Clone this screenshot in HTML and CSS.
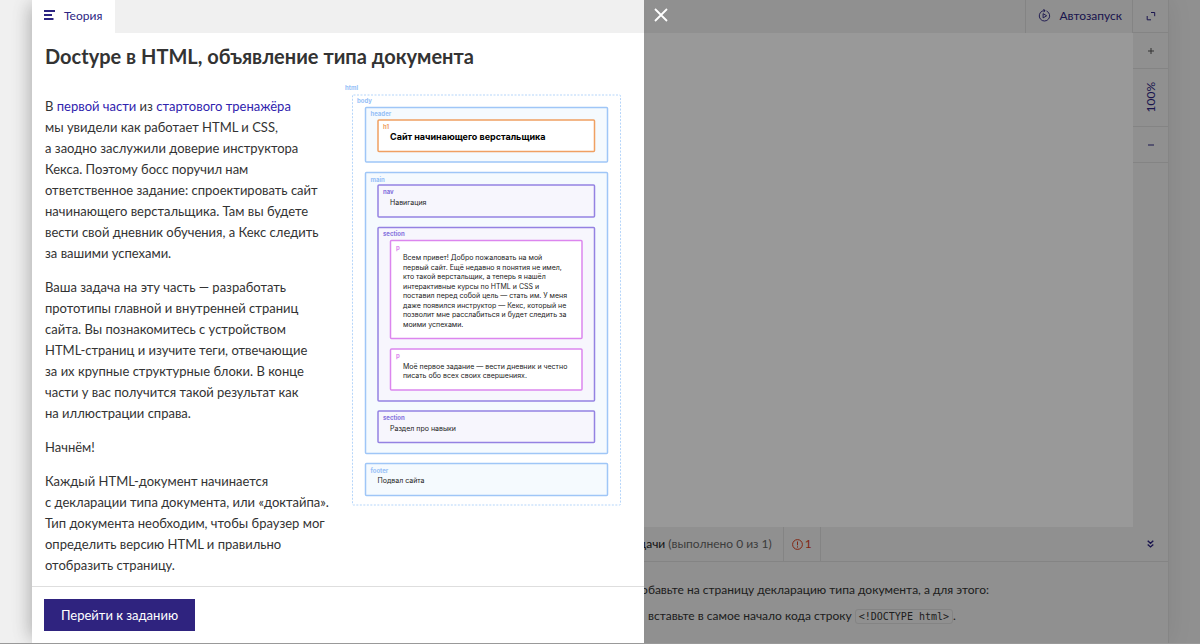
FILE: index.html
```html
<!DOCTYPE html>
<html lang="ru">
<head>
<meta charset="utf-8">
<title>Doctype в HTML, объявление типа документа</title>
<meta name="viewport" content="width=device-width, initial-scale=1">
<link rel="stylesheet" href="styles.css">
</head>
<body>
<div class="page">
  <div class="app">
    <div class="editor"></div>
    <main class="workspace">
      <div class="toolbar">
        <button class="toolbar__button" type="button">
          <svg class="icon-run" viewBox="0 0 14 14" aria-hidden="true"><path d="M9.2 2.2A5.6 5.6 0 1 1 4.5 2.3L7.5 1.6"/><path d="M5.6 0 7.6 1.6 6.2 3.4M5.5 5v4.6l3.8-2.3z"/></svg>
          Автозапуск
        </button>
        <button class="toolbar__expand" type="button" aria-label="Развернуть">
          <svg class="icon-expand" viewBox="0 0 10 10" aria-hidden="true"><path d="M5 1.5h3.7v3.7M1.2 5v3.8H5"/></svg>
        </button>
      </div>
      <div class="result">
        <div class="preview"></div>
        <div class="scale">
          <button class="scale__step scale__step--muted" type="button" aria-label="Увеличить"><svg class="icon-step" viewBox="0 0 6 6" aria-hidden="true"><path d="M0 3h6M3 0v6"/></svg></button>
          <button class="scale__value" type="button"><span class="scale__text">100%</span></button>
          <button class="scale__step" type="button" aria-label="Уменьшить"><svg class="icon-step" viewBox="0 0 6 6" aria-hidden="true"><path d="M0 3h6"/></svg></button>
        </div>
      </div>
      <div class="tasks-bar">
        <div class="tasks-bar__title">Задачи <span class="tasks-bar__count">(выполнено 0 из 1)</span></div>
        <div class="tasks-bar__errors">
          <svg class="icon-error" viewBox="0 0 11 11" aria-hidden="true"><circle cx="5.5" cy="5.5" r="4.9"/><path d="M5.5 2.5v3.8M5.5 7.3v1.3"/></svg>1
        </div>
        <button class="tasks-bar__toggle" type="button" aria-label="Свернуть">
          <svg class="icon-toggle" viewBox="0 0 7 8" aria-hidden="true"><path d="M.7.7l2.8 2.5L6.3.7M.7 4.4l2.8 2.5 2.8-2.5"/></svg>
        </button>
      </div>
      <div class="tasks">
        <p class="tasks__intro">Добавьте на страницу декларацию типа документа, а для этого:</p>
        <ul class="tasks__list">
          <li>вставьте в самое начало кода строку <code class="tasks__code">&lt;!DOCTYPE html&gt;</code>.</li>
        </ul>
      </div>
    </main>
  </div>

  <div class="layer">
    <section class="theory" role="dialog" aria-labelledby="theory-title">
      <div class="theory__tabs">
        <button class="theory__tab" type="button">
          <svg class="icon-menu" viewBox="0 0 12 10" aria-hidden="true"><path d="M0 1h11M0 5h8M0 9h9.5"/></svg>
          Теория
        </button>
      </div>
      <div class="theory__body">
        <h1 class="theory__title" id="theory-title">Doctype в HTML, объявление типа документа</h1>
        <div class="theory__columns">
          <div class="theory__text">
            <p>В <a href="#part">первой части</a> из <a href="#trainer">стартового тренажёра</a><br>мы увидели как работает HTML и CSS,<br>а заодно заслужили доверие инструктора<br>Кекса. Поэтому босс поручил нам<br>ответственное задание: спроектировать сайт<br>начинающего верстальщика. Там вы будете<br>вести свой дневник обучения, а Кекс следить<br>за вашими успехами.</p>
            <p>Ваша задача на эту часть — разработать<br>прототипы главной и внутренней страниц<br>сайта. Вы познакомитесь с устройством<br>HTML-страниц и изучите теги, отвечающие<br>за их крупные структурные блоки. В конце<br>части у вас получится такой результат как<br>на иллюстрации справа.</p>
            <p>Начнём!</p>
            <p>Каждый HTML-документ начинается<br>с декларации типа документа, или «доктайпа».<br>Тип документа необходим, чтобы браузер мог<br>определить версию HTML и правильно<br>отобразить страницу.</p>
          </div>
          <svg class="scheme" viewBox="0 0 552 844" role="img" aria-label="Структура страницы">
            <rect class="scheme__body" x="15" y="22" width="536" height="820" rx="2"/>
            <rect class="scheme__block" x="41" y="47" width="484" height="109" rx="2"/>
            <rect class="scheme__h1" x="66" y="72" width="433" height="63" rx="2"/>
            <rect class="scheme__block" x="41" y="177" width="484" height="562" rx="2"/>
            <rect class="scheme__section" x="66" y="202" width="433" height="64" rx="2"/>
            <rect class="scheme__section" x="66" y="287" width="433" height="347" rx="2"/>
            <rect class="scheme__p" x="91" y="313" width="383" height="196" rx="2"/>
            <rect class="scheme__p" x="91" y="530" width="383" height="82" rx="2"/>
            <rect class="scheme__section" x="66" y="654" width="433" height="63" rx="2"/>
            <rect class="scheme__block" x="41" y="759" width="484" height="64" rx="2"/>
            <g class="scheme__tag scheme__tag--blue">
              <text x="0" y="12">html</text>
              <text x="24" y="38">body</text>
              <text x="51" y="64">header</text>
              <text x="51" y="195">main</text>
              <text x="51" y="777">footer</text>
            </g>
            <text class="scheme__tag scheme__tag--orange" x="76" y="89">h1</text>
            <g class="scheme__tag scheme__tag--violet">
              <text x="76" y="220">nav</text>
              <text x="76" y="304">section</text>
              <text x="76" y="672">section</text>
            </g>
            <g class="scheme__tag scheme__tag--pink">
              <text x="102" y="331">p</text>
              <text x="102" y="548">p</text>
            </g>
            <text class="scheme__title" x="90" y="112">Сайт начинающего верстальщика</text>
            <g class="scheme__copy">
              <text x="90" y="242">Навигация</text>
              <text x="116" y="352">Всем привет! Добро пожаловать на мой</text>
              <text x="116" y="371">первый сайт. Ещё недавно я понятия не имел,</text>
              <text x="116" y="390">кто такой верстальщик, а теперь я нашёл</text>
              <text x="116" y="409">интерактивные курсы по HTML и CSS и</text>
              <text x="116" y="428">поставил перед собой цель — стать им. У меня</text>
              <text x="116" y="447">даже появился инструктор — Кекс, который не</text>
              <text x="116" y="466">позволит мне расслабиться и будет следить за</text>
              <text x="116" y="485">моими успехами.</text>
              <text x="116" y="569">Моё первое задание — вести дневник и честно</text>
              <text x="116" y="588">писать обо всех своих свершениях.</text>
              <text x="90" y="693">Раздел про навыки</text>
              <text x="65" y="798">Подвал сайта</text>
            </g>
          </svg>
        </div>
      </div>
      <div class="theory__footer">
        <button class="theory__next" type="button">Перейти к заданию</button>
      </div>
    </section>
    <div class="backdrop">
      <button class="backdrop__close" type="button" aria-label="Закрыть">
        <svg class="icon-close" viewBox="0 0 14 14" aria-hidden="true"><path d="M1 1l12 12M13 1 1 13"/></svg>
      </button>
    </div>
  </div>
</div>
</body>
</html>
```
FILE: styles.css
```css
* {
  box-sizing: border-box;
}

body {
  margin: 0;
  font-family: Lato, Roboto, sans-serif;
  font-size: 12px;
  line-height: 21px;
  color: #333;
  background: #f0f0f0;
}

button {
  margin: 0;
  padding: 0;
  border: 0;
  background: none;
  font: inherit;
  color: #2c2482;
  cursor: pointer;
}

svg {
  display: block;
  flex: none;
}

svg path,
svg circle {
  fill: none;
  stroke: currentColor;
}

p {
  margin: 0;
}

.page {
  position: relative;
  min-height: 100vh;
  display: flex;
  border-bottom: 1px solid #999;
  overflow: hidden;
}

/* Trainer workspace */

.app {
  flex: 1;
  display: grid;
  grid-template-columns: 1fr 1fr;
  margin: 0 31px 0 32px;
  border-right: 1px solid #dedede;
  box-shadow: 0 0 24px rgba(0, 0, 0, 0.08);
}

.editor {
  background: #fff;
}

.workspace {
  display: flex;
  flex-direction: column;
  background: #f0f0f0;
}

.toolbar {
  display: flex;
  justify-content: flex-end;
  height: 33px;
}

.toolbar__button {
  display: flex;
  align-items: center;
  gap: 8px;
  padding: 0 10px 3px 12px;
  border-left: 1px solid #dcdcdc;
}

.toolbar__expand {
  width: 36px;
  display: grid;
  place-items: center;
  border-left: 1px solid #dcdcdc;
  border-bottom: 1px solid #dcdcdc;
}

.result {
  flex: 1;
  display: flex;
}

.preview {
  flex: 1;
  background: #fff;
}

.scale {
  width: 35px;
  display: flex;
  flex-direction: column;
}

.scale__step,
.scale__value {
  display: grid;
  place-items: center;
  height: 36px;
  border-bottom: 1px solid #dcdcdc;
}

.scale__step--muted {
  color: #555;
}

.scale__value {
  height: 58px;
}

.scale__text {
  writing-mode: vertical-rl;
  transform: rotate(180deg);
}

.tasks-bar {
  display: flex;
  height: 35px;
  line-height: 34px;
  border-bottom: 1px solid #dcdcdc;
}

.tasks-bar__title {
  padding: 0 11px 0 26px;
  color: #222;
}

.tasks-bar__count {
  color: #666;
}

.tasks-bar__errors {
  display: flex;
  align-items: center;
  gap: 2px;
  padding: 0 8px;
  border: solid #dcdcdc;
  border-width: 0 1px;
  color: #d8401f;
}

.tasks-bar__toggle {
  width: 35px;
  margin-left: auto;
  display: grid;
  place-items: center;
}

.tasks {
  padding: 17px 24px 16px 32px;
}

.tasks__list {
  margin: 5px 0 0;
  padding: 0 0 0 16px;
}

.tasks__code {
  padding: 1px 3px;
  border: 1px solid #dcdcdc;
  border-radius: 3px;
  font-family: "DejaVu Sans Mono", monospace;
  font-size: 10px;
}

/* Theory panel over the workspace */

.layer {
  position: absolute;
  inset: 0;
  display: flex;
  padding-left: 32px;
}

.theory {
  flex: 612;
  min-width: 0;
  display: flex;
  flex-direction: column;
  background: #fff;
  box-shadow: -8px 0 16px -6px rgba(0, 0, 0, 0.22);
}

.theory__tabs {
  height: 33px;
  display: flex;
  background: #f0f0f0;
}

.theory__tab {
  display: flex;
  align-items: center;
  gap: 8px;
  padding: 0 13px 3px 12px;
  background: #fff;
}

.theory__body {
  flex: 1;
  padding: 11px 23px 0 13px;
}

.theory__title {
  margin: 0;
  font-size: 20px;
  line-height: 24px;
  font-weight: 700;
}

.theory__columns {
  display: flex;
  justify-content: space-between;
  padding-top: 16px;
}

.theory__text {
  display: flex;
  flex-direction: column;
  gap: 13px;
  padding-top: 12px;
  font-size: 13px;
  white-space: nowrap;
}

.theory__text a {
  color: #3023ae;
  text-decoration: none;
}

.theory__footer {
  padding: 12px;
  border-top: 1px solid #dedede;
}

.theory__next {
  height: 32px;
  padding: 0 17px;
  font-size: 13px;
  background: #2f237f;
  color: #fff;
}

.backdrop {
  flex: 556;
  background: rgba(0, 0, 0, 0.4);
}

.backdrop__close {
  display: block;
  padding: 8px 10px;
  color: #fff;
}

/* Page structure scheme */

.scheme {
  width: 276px;
  height: 422px;
  font-family: Inter, sans-serif;
}

.scheme rect {
  fill: #f5fafe;
  stroke-width: 3;
}

.scheme .scheme__body {
  fill: none;
  stroke: #b5d5fa;
  stroke-width: 2;
  stroke-dasharray: 4 3;
}

.scheme__block {
  stroke: #9fc6f7;
}

.scheme .scheme__h1 {
  fill: #fff;
  stroke: #f0a062;
}

.scheme .scheme__section {
  fill: #f7f6fd;
  stroke: #9482e2;
}

.scheme .scheme__p {
  fill: #fff;
  stroke: #dc86ee;
}

.scheme__tag {
  font-size: 12px;
  font-weight: 700;
}

.scheme__tag--blue {
  fill: #95c0f7;
}

.scheme__tag--orange {
  fill: #f0a062;
}

.scheme__tag--violet {
  fill: #8672de;
}

.scheme__tag--pink {
  fill: #dc86ee;
}

.scheme__title {
  font-size: 18px;
  font-weight: 700;
  fill: #000;
}

.scheme__copy {
  font-size: 14px;
  fill: #222;
}

/* Icons */

.icon-run {
  width: 13px;
  height: 13px;
}

.icon-expand {
  width: 10px;
  height: 10px;
}

.icon-step {
  width: 6px;
  height: 6px;
}

.icon-error {
  width: 11px;
  height: 11px;
}

.icon-toggle {
  width: 7px;
  height: 8px;
}

.icon-toggle path {
  stroke-width: 1.4;
}

.icon-menu {
  width: 12px;
  height: 10px;
}

.icon-menu path {
  stroke-width: 2;
}

.icon-close {
  width: 14px;
  height: 14px;
}

.icon-close path {
  stroke-width: 1.8;
}
```
